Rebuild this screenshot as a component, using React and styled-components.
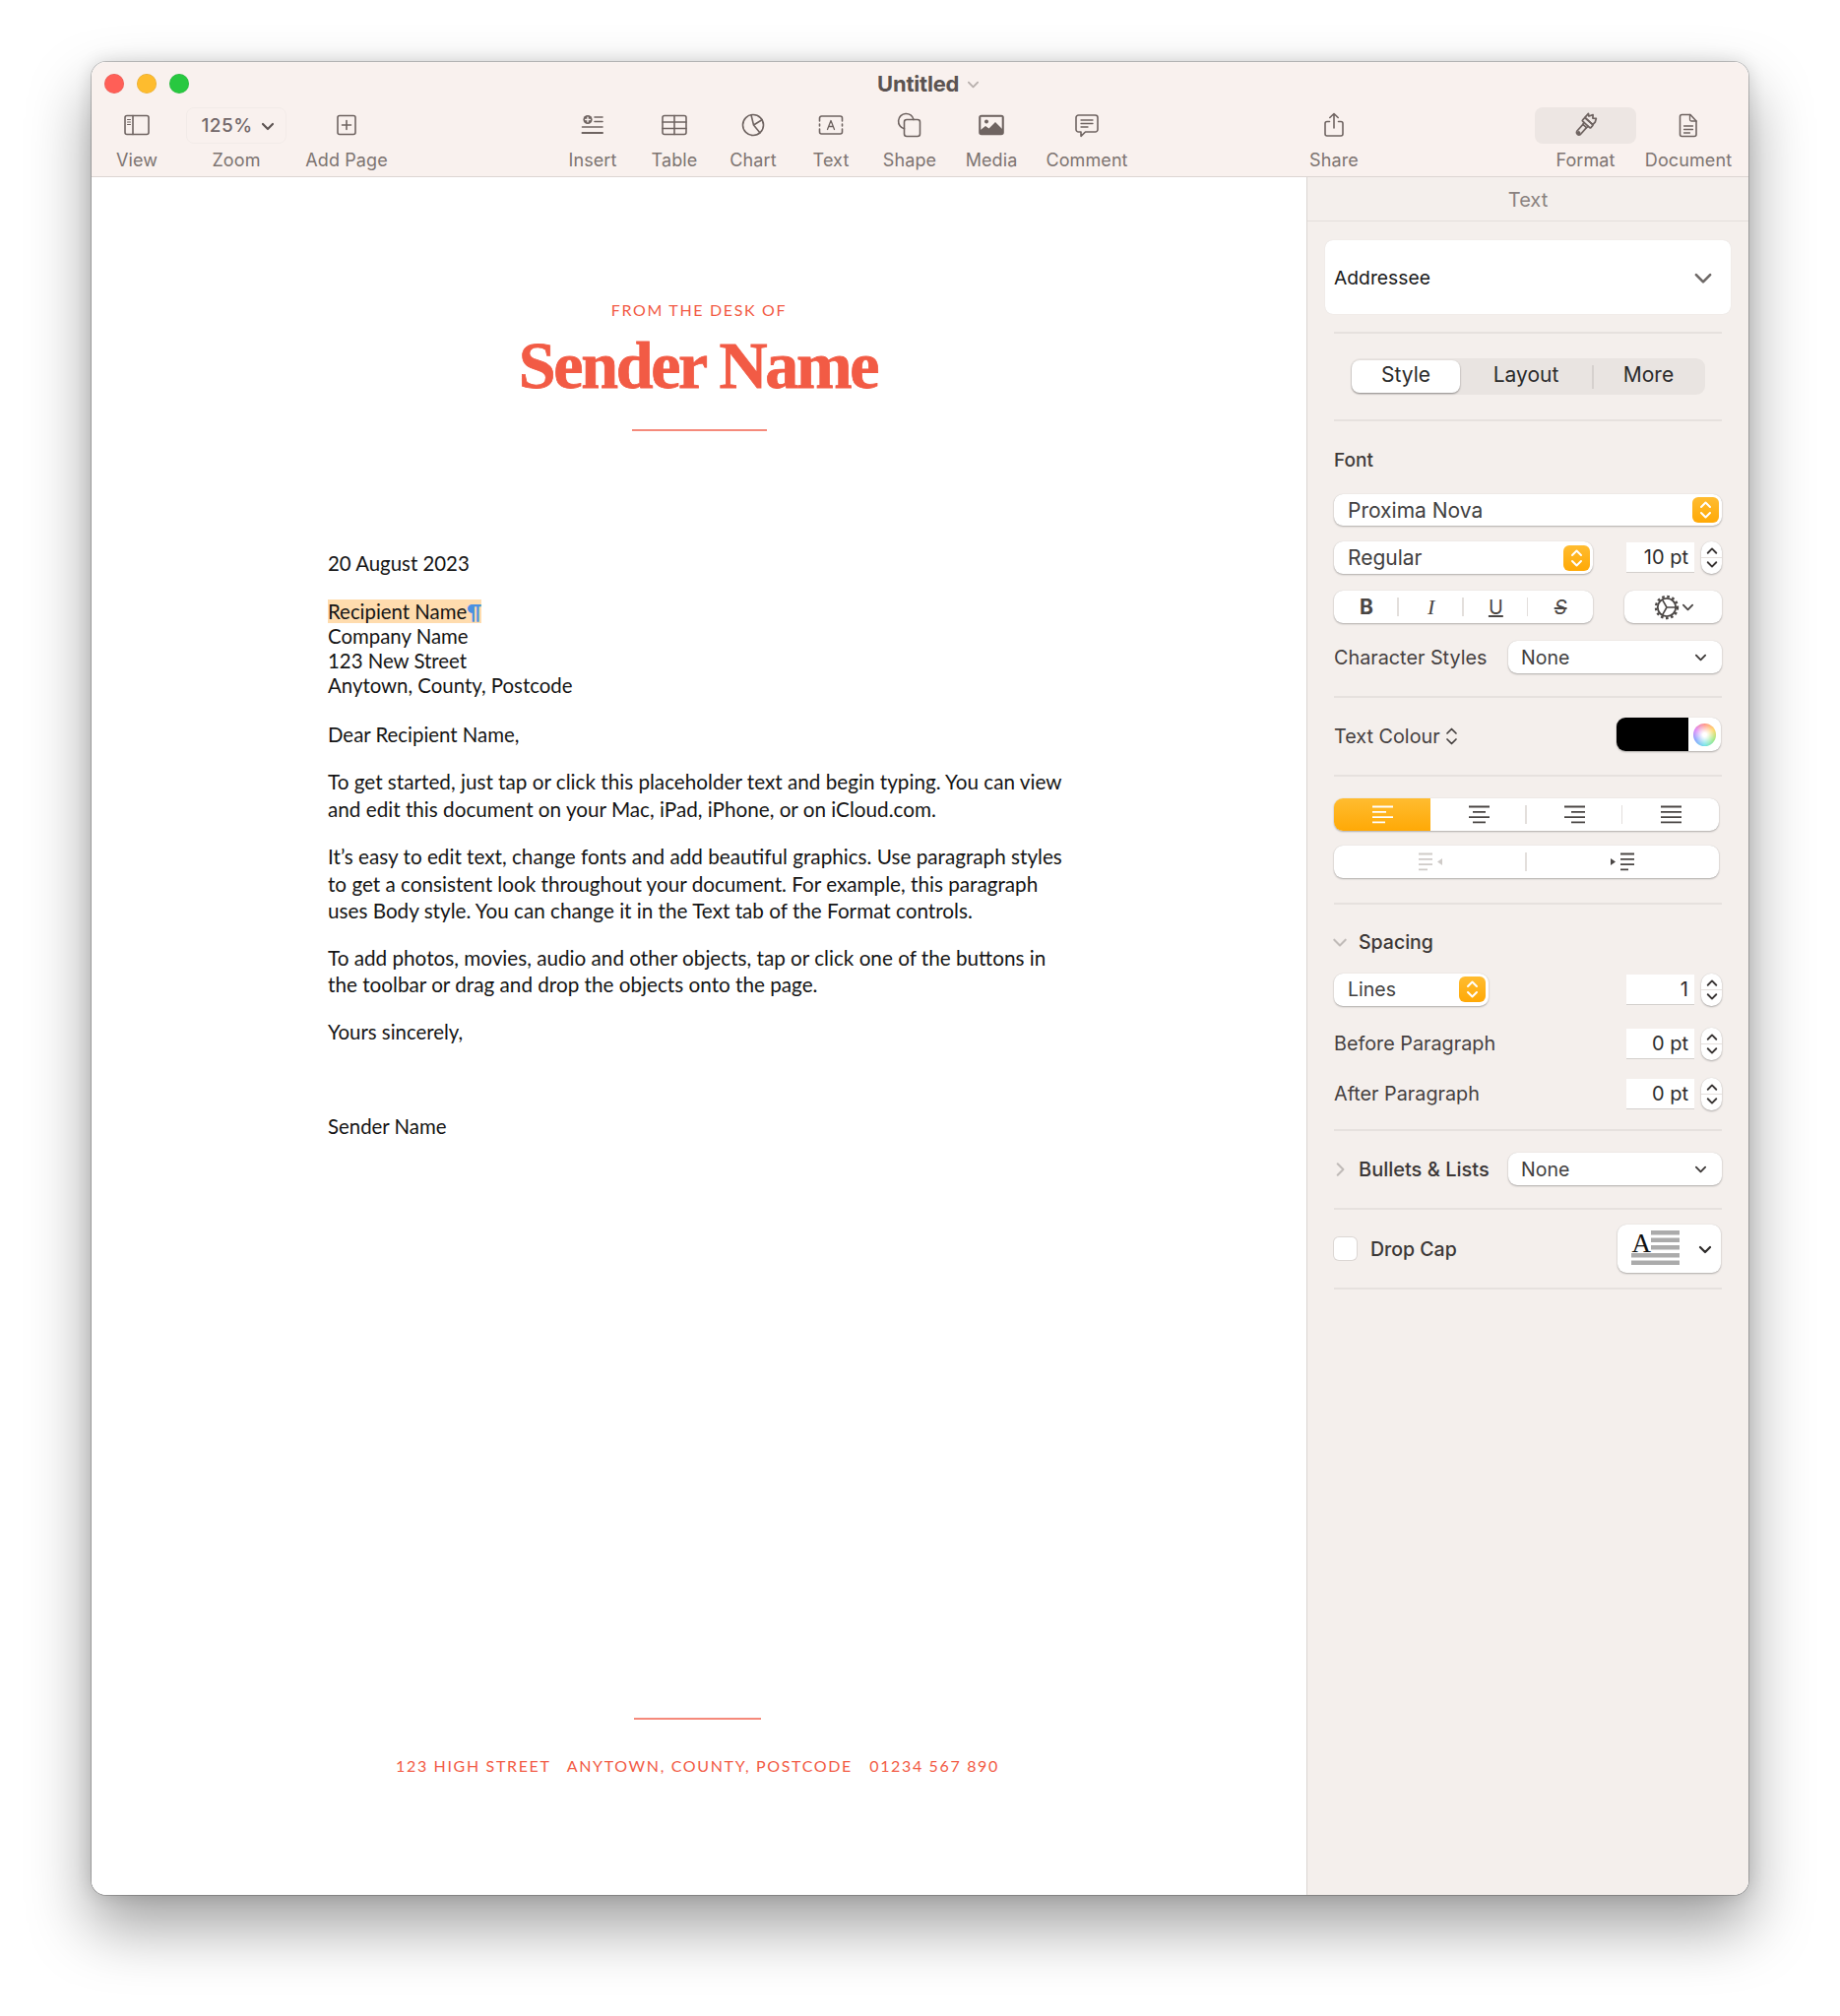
import React from "react";
import styled, { createGlobalStyle } from "styled-components";

const Global = createGlobalStyle`
  html, body { margin: 0; padding: 0; background: #fff; }
  body { width: 1869px; height: 2048px; overflow: hidden; -webkit-font-smoothing: antialiased; }
  * { box-sizing: border-box; }
`;
const UI = `"Inter", "Liberation Sans", sans-serif`;
const DOC = `"Lato", "Open Sans", sans-serif`;
const CORAL = "#f25b45";
const ICON = "#6f6461";

const Page = styled.div`padding: 63px 93px 0; height: 2048px;`;
const Win = styled.div`
  width: 1683px; height: 1862px; display: flex; flex-direction: column;
  border-radius: 15px; overflow: hidden; background: #fff;
`;
const Shadow = styled.div`
  width: 1683px; border-radius: 15px;
  box-shadow: 0 32px 62px 2px rgba(0,0,0,.36), 0 0 18px rgba(0,0,0,.14), 0 0 0 1px rgba(0,0,0,.2);
`;
const Header = styled.header`
  height: 117px; flex: none; background: #f9f1ee; border-bottom: 1px solid #dcd5d2;
  display: flex; flex-direction: column;
`;
const TitleRow = styled.div`height: 46px; display: flex; align-items: center; padding: 0 0 2px 13px;`;
const Lights = styled.div`display: flex; gap: 13px;`;
const Light = styled.span`
  width: 20px; height: 20px; border-radius: 50%; background: ${p => p.$c};
  box-shadow: inset 0 0 0 .5px rgba(0,0,0,.12);
`;
const Title = styled.div`
  margin-left: 699px; display: flex; align-items: center; gap: 8px;
  font: 700 22px ${UI}; color: #5b5351; letter-spacing: -.2px;
`;
const Tools = styled.div`display: flex; flex: 1;`;
const Tool = styled.div`
  width: ${p => p.$w || 78}px; margin-left: ${p => p.$ml || 0}px;
  display: flex; flex-direction: column; align-items: center; flex: none;
`;
const ToolIcon = styled.div`
  width: 100%; height: 37px; padding-bottom: 2px; display: flex; align-items: center; justify-content: center;
  border-radius: 8px; background: ${p => p.$on ? "#ede6e3" : "transparent"};
`;
const ZoomPill = styled(ToolIcon)`
  border: 1.5px solid #f2ebe8; padding: 0 0 0 3px; gap: 8px; font: 500 19px ${UI}; color: #72686a; letter-spacing: .45px;
`;
const ToolLabel = styled.div`
  margin-top: 7px; font: 400 18px/20px ${UI}; color: #7d7471; white-space: nowrap; letter-spacing: .1px;
`;
const Main = styled.div`flex: 1; display: flex; min-height: 0;`;
const Doc = styled.main`flex: 1; display: flex; flex-direction: column; background: #fff; font-family: ${DOC}; color: #151515;`;
const Letterhead = styled.div`display: flex; flex-direction: column; align-items: center; padding-top: 125px;`;
const Eyebrow = styled.div`font-size: 16px; line-height: 20px; letter-spacing: 1.65px; color: ${CORAL};`;
const SenderName = styled.h1`
  margin: 6px 2px 0 0; font: 700 68px/80px "Liberation Serif", serif; color: ${CORAL}; letter-spacing: -2.3px;
  -webkit-text-stroke: .8px ${CORAL};
`;
const Rule = styled.div`width: ${p => p.$w}px; height: 2px; margin-top: ${p => p.$mt}px; background: #f58a7b;`;
const Body = styled.div`margin: 122px 0 0 240px; width: 780px;`;
const Line = styled.div`font-size: 20.4px; line-height: 25px; margin-top: ${p => p.$mt || 0}px; white-space: nowrap;`;
const Para = styled.p`font-size: 20.7px; line-height: 27.5px; margin: ${p => p.$mt}px 0 0; white-space: nowrap;`;
const Mark = styled.span`background: #ffdcae;`;
const Pilcrow = styled.span`color: #4a90e2; font-weight: 700;`;
const Footer = styled.div`margin-top: auto; padding: 0 3px 121px 0; display: flex; flex-direction: column; align-items: center;`;
const FooterText = styled.div`
  margin-top: 37px; font-size: 16px; line-height: 20px; letter-spacing: 1.65px; color: ${CORAL}; white-space: pre;
`;
const Side = styled.aside`
  width: 449px; flex: none; background: #f4efec; border-left: 1px solid #dad5d2; font-family: ${UI};
  display: flex; flex-direction: column;
`;
const SideHead = styled.div`
  height: 45px; flex: none; padding-top: 2px; border-bottom: 1px solid #e3dedb; display: flex; align-items: center; justify-content: center;
  font-size: 20px; color: #8a8280;
`;
const SideBody = styled.div`padding: 0 27px; display: flex; flex-direction: column;`;
const StyleCard = styled.div`
  margin: 19px -9px 0; height: 75px; border-radius: 8px; background: #fff; padding: 0 18px 0 9px;
  display: flex; align-items: center; justify-content: space-between; font-size: 19.3px; color: #1a1a1a;
  box-shadow: 0 0 1px rgba(0,0,0,.12);
`;
const Sep = styled.div`height: 2px; margin-top: ${p => p.$mt}px; background: #e6e1de; flex: none;`;
const Tabs = styled.div`
  margin: 25px 17px 0; height: 37px; border-radius: 9px; background: #e9e4e1; display: flex; align-items: center;
  padding: 0 1px; font-size: 21px; color: #2b2b2b;
`;
const Tab = styled.div`
  width: ${p => p.$w}px; height: ${p => p.$on ? 33 : 24}px; padding-bottom: 4px; display: flex; align-items: center; justify-content: center;
  ${p => p.$on ? "background:#fff;border-radius:8px;box-shadow:0 1px 2px rgba(0,0,0,.4);" : ""}
  ${p => p.$div ? "border-right:2px solid #d6d1ce;" : ""}
`;
const Label = styled.div`
  margin-top: ${p => p.$mt}px; font-size: 19px; line-height: 22px; font-weight: ${p => p.$w || 500}; color: #3f3b3a;
`;
const Row = styled.div`
  margin-top: ${p => p.$mt}px; height: ${p => p.$h || 33}px; display: flex; align-items: center; justify-content: space-between; flex: none;
`;
const RowText = styled.span`font-size: 19.8px; color: #45403f; white-space: nowrap;`;
const control = `
  background: #fff; border-radius: 9px;
  box-shadow: 0 1px 2px rgba(0,0,0,.28), 0 0 1px rgba(0,0,0,.14);
`;
const Select = styled.div`
  ${control}
  width: ${p => p.$w ? p.$w + "px" : "100%"}; height: ${p => p.$h || 33}px; flex: none;
  padding: 0 3px 0 14px; display: flex; align-items: center; justify-content: space-between;
  font-size: ${p => p.$fs || 21}px; color: #414040;
`;
const OrangeStep = styled.div`
  width: 27px; height: 26px; border-radius: 6px; background: linear-gradient(#ffbc30, #ffa906);
  display: flex; align-items: center; justify-content: center;
`;
const Popup = styled(Select)`padding: 0 15px 0 13px;`;
const FieldGroup = styled.div`display: flex; align-items: center; gap: 7px; margin-right: 0;`;
const Field = styled.div`
  width: 69px; height: 31px; background: #fff; border-bottom: 1.5px solid #d3cfcc;
  display: flex; align-items: center; justify-content: flex-end; padding-right: 6px;
  font-size: 20px; color: #2c2c2c;
`;
const StepWrap = styled.div`
  ${control}
  width: 21px; height: 33px; border-radius: 10px; display: flex; flex-direction: column; align-items: center; justify-content: space-between;
  padding: 4px 0; position: relative;
`;
const StepLine = styled.div`width: 100%; height: 1px; background: #e6e1de;`;
const Segs = styled.div`
  ${control}
  width: ${p => p.$w}px; height: 33px; display: flex; align-items: center; flex: none; overflow: hidden;
`;
const Seg = styled.div`
  flex: ${p => p.$f || 1}; height: 100%; display: flex; align-items: center; justify-content: center; position: relative;
  ${p => p.$on ? "background:linear-gradient(#ffbc30,#ffa906);" : ""}
  ${p => p.$div ? `&::after{content:"";position:absolute;right:0;top:7px;bottom:7px;width:1.5px;background:#e3dfdc;}` : ""}
`;
const Fmt = styled.span`
  font: ${p => p.$font}; color: #4a4644; text-decoration: ${p => p.$deco || "none"};
`;
const GearBtn = styled.div`
  ${control}
  width: 99px; height: 33px; display: flex; align-items: center; justify-content: center; gap: 1px;
`;
const LabelChooser = styled.div`display: flex; align-items: center; gap: 5px; padding-top: 3px;`;
const Swatch = styled.div`
  ${control}
  width: 106px; height: 34px; display: flex; overflow: hidden; align-items: center; margin-right: 1px;
`;
const Black = styled.div`width: 73px; height: 100%; background: #000;`;
const Wheel = styled.div`
  width: 23px; height: 23px; margin-left: 5px; border-radius: 50%;
  background: radial-gradient(circle, #fff 12%, rgba(255,255,255,0) 72%),
    conic-gradient(#ff8c7c, #ffd35a, #93e87a, #6be1e6, #7c9dff, #dc7cf5, #ff8c7c);
`;
const CollapseRow = styled.div`
  margin: ${p => p.$mt}px 0 0 -2px; display: flex; align-items: center; height: ${p => p.$h || 24}px; flex: none;
`;
const Disclose = styled.div`width: 27px; display: flex; align-items: center; flex: none;`;
const Strong = styled.span`font-size: ${p => p.$fs || 19.5}px; font-weight: 500; color: #3b3736; white-space: nowrap;`;
const Check = styled.div`
  width: 23px; height: 23px; border-radius: 5px; background: #fff; box-shadow: 0 0 0 1px #dcd7d4;
`;
const CheckRow = styled.div`display: flex; align-items: center; gap: 14px;`;
const DropSelect = styled.div`
  ${control}
  width: 105px; height: 49px; margin-right: 1px; padding: 0 9px 0 14px; display: flex; align-items: center; justify-content: space-between;
`;

const Ch = ({ dir = "down", s = 14, c = "#4b4644", w = 2 }) => {
  const d = { down: "M2 5l5 5 5-5", up: "M2 9l5-5 5 5", right: "M5 2l5 5-5 5" }[dir];
  return <svg width={s} height={s} viewBox="0 0 14 14" fill="none"><path d={d} stroke={c} strokeWidth={w} strokeLinecap="round" strokeLinejoin="round" /></svg>;
};
const Updown = () => (
  <svg width="13" height="20" viewBox="0 0 13 20" fill="none" stroke="#fff" strokeWidth="2" strokeLinecap="round" strokeLinejoin="round">
    <path d="M2 7l4.5-4.5L11 7" /><path d="M2 13l4.5 4.5L11 13" />
  </svg>
);
const Stepper = () => (
  <StepWrap>
    <Ch dir="up" s={12} c="#3a3635" w={2.2} />
    <StepLine />
    <Ch s={12} c="#3a3635" w={2.2} />
  </StepWrap>
);
const Ic = ({ w = 28, h = 28, children, fill = "none" }) => (
  <svg width={w} height={h} viewBox={`0 0 ${w} ${h}`} fill={fill} stroke={ICON} strokeWidth="1.6" strokeLinecap="round" strokeLinejoin="round">{children}</svg>
);
const ViewIcon = () => <Ic><rect x="2" y="4.5" width="24" height="19" rx="2" /><path d="M10 4.5v19" /><path d="M4.5 8.5h3M4.5 11h3M4.5 13.5h3" strokeWidth="1.1" /></Ic>;
const AddIcon = () => <Ic><rect x="5" y="4.5" width="18" height="19" rx="2" /><path d="M14 9.5v9M9.5 14h9" /></Ic>;
const InsertIcon = () => (
  <Ic>
    <circle cx="9" cy="8.5" r="4.6" fill={ICON} stroke="none" />
    <path d="M9 6.2v4.6M6.7 8.5h4.6" stroke="#f9f1ee" strokeWidth="1.4" />
    <path d="M16 6h8M16 10.5h8M3.5 16h20.5" /><path d="M3.5 22h20.5" strokeWidth="2" />
  </Ic>
);
const TableIcon = () => <Ic><rect x="2" y="4.5" width="24" height="19" rx="2" /><path d="M2 11h24M2 17.5h24M14 4.5v19" /></Ic>;
const ChartIcon = () => <Ic><circle cx="14" cy="14" r="10.5" /><path d="M12 3.8L14.5 14l8.5-5.3M14.5 14l6.5 8" /></Ic>;
const TextIcon = () => (
  <Ic>
    <path d="M2.5 10V7a2 2 0 0 1 2-2h19a2 2 0 0 1 2 2v3M2.5 18v3a2 2 0 0 0 2 2h19a2 2 0 0 0 2-2v-3M2.5 13v2M25.5 13v2" />
    <path d="M10.5 18.5L14 9.5l3.5 9M11.7 15.5h4.6" strokeWidth="1.3" />
  </Ic>
);
const ShapeIcon = () => (
  <Ic>
    <path d="M8.5 17.8A7.8 7.8 0 1 1 18 8.5" />
    <rect x="8.5" y="8.5" width="16" height="17" rx="2.5" />
  </Ic>
);
const MediaIcon = () => (
  <Ic>
    <rect x="2" y="4.5" width="24" height="19" rx="2" fill={ICON} stroke={ICON} />
    <rect x="3.3" y="5.8" width="21.4" height="16" fill="#f9f1ee" stroke="none" />
    <circle cx="9" cy="10.5" r="2" fill={ICON} stroke="none" />
    <path d="M3 23v-4l5-4 3.5 2.5L18 11l7 7v5z" fill={ICON} stroke="none" />
  </Ic>
);
const CommentIcon = () => (
  <Ic>
    <path d="M5.5 4h17a2.5 2.5 0 0 1 2.5 2.5v12a2.5 2.5 0 0 1-2.5 2.5H12.5l-4.5 4.3V21H5.5A2.5 2.5 0 0 1 3 18.5v-12A2.5 2.5 0 0 1 5.5 4z" />
    <path d="M8 9h12M8 12.5h12M8 16h7" strokeWidth="1.3" />
  </Ic>
);
const ShareIcon = () => (
  <Ic>
    <path d="M9.5 10.5H7a2 2 0 0 0-2 2V23a2 2 0 0 0 2 2h14a2 2 0 0 0 2-2V12.5a2 2 0 0 0-2-2h-2.5" />
    <path d="M14 17V2.5M9.8 6.5L14 2.5l4.2 4" />
  </Ic>
);
const FormatIcon = () => (
  <Ic>
    <g transform="rotate(42 14 14) translate(14 14) scale(1.08) translate(-14 -14)">
      <path d="M8.5 9.5V4.5l2 1.5 2-3.5 2 2.5 2.5-2 1.5 3v3.5z" />
      <rect x="8.5" y="9.5" width="10.5" height="4" rx=".8" />
      <path d="M11.5 15.5h4.5v8.5a2.3 2.3 0 0 1-4.5 0z" />
      <path d="M11.5 15.5l-.5-2M16 15.5l.5-2" />
      <circle cx="13.8" cy="24" r=".8" />
    </g>
  </Ic>
);
const DocIcon = () => (
  <Ic>
    <path d="M7.5 3.5h8.5l6 6.5v13.5a2 2 0 0 1-2 2H7.5a2 2 0 0 1-2-2v-18a2 2 0 0 1 2-2z" />
    <path d="M15.5 3.5v5a1.5 1.5 0 0 0 1.5 1.5h5M9.5 15h9M9.5 18.5h9M9.5 22h6" strokeWidth="1.3" />
  </Ic>
);
const Gear = () => (
  <svg width="28" height="28" viewBox="0 0 28 28" fill="none" stroke="#4a4644">
    <circle cx="14" cy="14" r="9.2" strokeWidth="1.8" />
    <circle cx="14" cy="14" r="11" strokeWidth="2.4" strokeDasharray="2.6 2.58" />
    <path d="M14 14H23M14 14L9.5 6.2M14 14L9.5 21.8" strokeWidth="1.6" />
  </svg>
);
const Lines = ({ rows, c = "#4a4644", w = 22 }) => (
  <svg width={w} height="20" viewBox={`0 0 ${w} 20`} stroke={c} strokeWidth="1.8">
    {rows.map(([a, b], i) => <path key={i} d={`M${a} ${1.5 + i * 5.3}H${b}`} />)}
  </svg>
);
const IndentLess = () => (
  <svg width="26" height="20" viewBox="0 0 26 20" stroke="#cfcbc8" strokeWidth="1.8">
    {[15, 15, 15, 10].map((b, i) => <path key={i} d={`M1 ${1.5 + i * 5.3}H${b}`} />)}
    <path d="M20 9.5L25 6v7z" fill="#cfcbc8" stroke="none" />
  </svg>
);
const IndentMore = () => (
  <svg width="26" height="20" viewBox="0 0 26 20" stroke="#4a4644" strokeWidth="1.8">
    {[25, 25, 25, 19].map((b, i) => <path key={i} d={`M11 ${1.5 + i * 5.3}H${b}`} />)}
    <path d="M6 9.5L1 6v7z" fill="#4a4644" stroke="none" />
  </svg>
);
const TinyUpdown = () => (
  <svg width="13" height="20" viewBox="0 0 13 20" fill="none" stroke="#45403f" strokeWidth="1.7" strokeLinecap="round" strokeLinejoin="round">
    <path d="M2 7l4.5-4.5L11 7" /><path d="M2 13l4.5 4.5L11 13" />
  </svg>
);
const DropArt = () => (
  <svg width="50" height="44" viewBox="0 -3 50 44">
    <text x="0.5" y="22" fontFamily="Liberation Serif, serif" fontSize="27" fill="#111">A</text>
    <g fill="#ababab">
      <rect x="20" y="0" width="29" height="4.5" /><rect x="20" y="7.5" width="29" height="4.5" /><rect x="20" y="15" width="29" height="4.5" />
      <rect x="0" y="23" width="49" height="4.5" /><rect x="0" y="30.5" width="49" height="4.5" />
    </g>
  </svg>
);

const tools = [
  { label: "View", ml: 7, icon: <ViewIcon /> },
  { label: "Zoom", w: 102, ml: 11, pill: true },
  { label: "Add Page", ml: 22, icon: <AddIcon /> },
  { label: "Insert", ml: 172, icon: <InsertIcon /> },
  { label: "Table", ml: 5, icon: <TableIcon /> },
  { label: "Chart", ml: 2, icon: <ChartIcon /> },
  { label: "Text", ml: 1, icon: <TextIcon /> },
  { label: "Shape", ml: 2, icon: <ShapeIcon /> },
  { label: "Media", ml: 5, icon: <MediaIcon /> },
  { label: "Comment", ml: 19, icon: <CommentIcon /> },
  { label: "Share", ml: 173, icon: <ShareIcon /> },
  { label: "Format", w: 103, ml: 165, icon: <FormatIcon />, on: true },
  { label: "Document", ml: 14, icon: <DocIcon /> },
];

export default function App() {
  return (
    <>
      <Global />
      <Page>
        <Shadow>
          <Win>
            <Header>
              <TitleRow>
                <Lights>
                  <Light $c="#ff5f57" /><Light $c="#febc2e" /><Light $c="#28c840" />
                </Lights>
                <Title>Untitled <Ch s={13} c="#b8b0ad" /></Title>
              </TitleRow>
              <Tools>
                {tools.map(t => (
                  <Tool key={t.label} $w={t.w} $ml={t.ml}>
                    {t.pill
                      ? <ZoomPill>125% <Ch s={14} c="#5e5553" w={2.2} /></ZoomPill>
                      : <ToolIcon $on={t.on}>{t.icon}</ToolIcon>}
                    <ToolLabel>{t.label}</ToolLabel>
                  </Tool>
                ))}
              </Tools>
            </Header>
            <Main>
              <Doc>
                <Letterhead>
                  <Eyebrow>FROM THE DESK OF</Eyebrow>
                  <SenderName>Sender Name</SenderName>
                  <Rule $w={137} $mt={25} />
                </Letterhead>
                <Body>
                  <Line>20 August 2023</Line>
                  <Line $mt={24}><Mark>Recipient Name<Pilcrow>¶</Pilcrow></Mark></Line>
                  <Line>Company Name</Line>
                  <Line>123 New Street</Line>
                  <Line>Anytown, County, Postcode</Line>
                  <Line $mt={25}>Dear Recipient Name,</Line>
                  <Para $mt={22}>To get started, just tap or click this placeholder text and begin typing. You can view<br />and edit this document on your Mac, iPad, iPhone, or on iCloud.com.</Para>
                  <Para $mt={21}>It’s easy to edit text, change fonts and add beautiful graphics. Use paragraph styles<br />to get a consistent look throughout your document. For example, this paragraph<br />uses Body style. You can change it in the Text tab of the Format controls.</Para>
                  <Para $mt={20}>To add photos, movies, audio and other objects, tap or click one of the buttons in<br />the toolbar or drag and drop the objects onto the page.</Para>
                  <Line $mt={21}>Yours sincerely,</Line>
                  <Line $mt={71}>Sender Name</Line>
                </Body>
                <Footer>
                  <Rule $w={129} $mt={0} />
                  <FooterText>{"123 HIGH STREET   ANYTOWN, COUNTY, POSTCODE   01234 567 890"}</FooterText>
                </Footer>
              </Doc>
              <Side>
                <SideHead>Text</SideHead>
                <SideBody>
                  <StyleCard>Addressee <Ch s={20} c="#6d6866" w={1.8} /></StyleCard>
                  <Sep $mt={18} />
                  <Tabs>
                    <Tab $w={110} $on>Style</Tab>
                    <Tab $w={136} $div>Layout</Tab>
                    <Tab $w={111}>More</Tab>
                  </Tabs>
                  <Sep $mt={25} />
                  <Label $mt={29}>Font</Label>
                  <Row $mt={23} $h={32}>
                    <Select $h={32}>Proxima Nova<OrangeStep><Updown /></OrangeStep></Select>
                  </Row>
                  <Row $mt={16}>
                    <Select $w={263}>Regular<OrangeStep><Updown /></OrangeStep></Select>
                    <FieldGroup><Field>10 pt</Field><Stepper /></FieldGroup>
                  </Row>
                  <Row $mt={17}>
                    <Segs $w={263}>
                      <Seg $div><Fmt $font={`700 21px ${UI}`}>B</Fmt></Seg>
                      <Seg $div><Fmt $font={`italic 400 22px "Liberation Serif", serif`}>I</Fmt></Seg>
                      <Seg $div><Fmt $font={`400 20px ${UI}`} $deco="underline">U</Fmt></Seg>
                      <Seg><Fmt $font={`italic 400 20px ${UI}`} $deco="line-through">S</Fmt></Seg>
                    </Segs>
                    <GearBtn><Gear /><Ch s={13} c="#4a4644" /></GearBtn>
                  </Row>
                  <Row $mt={18}>
                    <RowText>Character Styles</RowText>
                    <Popup $w={217} $fs={19.5}>None<Ch s={13} c="#3e3a39" /></Popup>
                  </Row>
                  <Sep $mt={23} />
                  <Row $mt={20} $h={34}>
                    <LabelChooser><RowText>Text Colour</RowText><TinyUpdown /></LabelChooser>
                    <Swatch><Black /><Wheel /></Swatch>
                  </Row>
                  <Sep $mt={24} />
                  <Row $mt={22}>
                    <Segs $w={391}>
                      <Seg $on><Lines c="#fff" rows={[[1, 22], [1, 15], [1, 22], [1, 14]]} /></Seg>
                      <Seg $div><Lines rows={[[1, 22], [5, 18], [1, 22], [5, 18]]} /></Seg>
                      <Seg $div><Lines rows={[[1, 22], [8, 22], [1, 22], [8, 22]]} /></Seg>
                      <Seg><Lines rows={[[1, 22], [1, 22], [1, 22], [1, 22]]} /></Seg>
                    </Segs>
                  </Row>
                  <Row $mt={15}>
                    <Segs $w={391}>
                      <Seg $div><IndentLess /></Seg>
                      <Seg><IndentMore /></Seg>
                    </Segs>
                  </Row>
                  <Sep $mt={25} />
                  <CollapseRow $mt={26}>
                    <Disclose><Ch s={16} c="#c0bbb8" w={1.8} /></Disclose>
                    <Strong>Spacing</Strong>
                  </CollapseRow>
                  <Row $mt={19} $h={34}>
                    <Select $w={157} $fs={19.5}>Lines<OrangeStep><Updown /></OrangeStep></Select>
                    <FieldGroup><Field>1</Field><Stepper /></FieldGroup>
                  </Row>
                  <Row $mt={21} $h={34}>
                    <RowText>Before Paragraph</RowText>
                    <FieldGroup><Field>0 pt</Field><Stepper /></FieldGroup>
                  </Row>
                  <Row $mt={17} $h={34}>
                    <RowText>After Paragraph</RowText>
                    <FieldGroup><Field>0 pt</Field><Stepper /></FieldGroup>
                  </Row>
                  <Sep $mt={19} />
                  <Row $mt={22}>
                    <CollapseRow $mt={0}>
                      <Disclose><Ch dir="right" s={16} c="#c0bbb8" w={1.8} /></Disclose>
                      <Strong $fs={20}>Bullets &amp; Lists</Strong>
                    </CollapseRow>
                    <Popup $w={217} $fs={19.5}>None<Ch s={13} c="#3e3a39" /></Popup>
                  </Row>
                  <Sep $mt={23} />
                  <Row $mt={15} $h={49}>
                    <CheckRow><Check /><Strong>Drop Cap</Strong></CheckRow>
                    <DropSelect><DropArt /><Ch s={14} c="#2f2c2b" w={2.2} /></DropSelect>
                  </Row>
                  <Sep $mt={15} />
                </SideBody>
              </Side>
            </Main>
          </Win>
        </Shadow>
      </Page>
    </>
  );
}
